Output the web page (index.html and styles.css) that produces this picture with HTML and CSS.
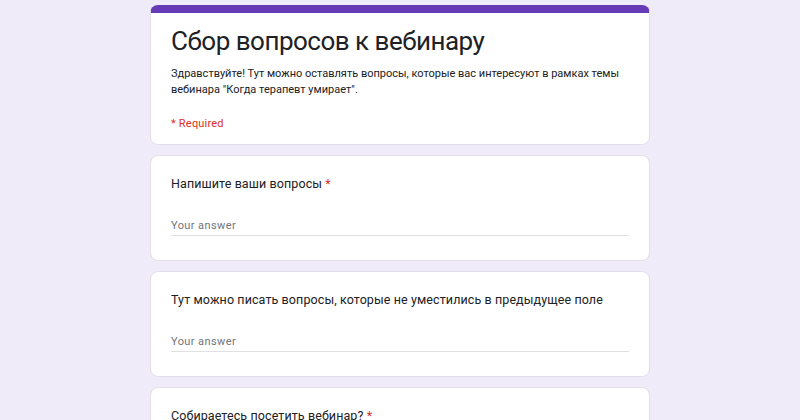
FILE: index.html
```html
<!DOCTYPE html>
<html lang="ru">
<head>
    <meta charset="UTF-8">
    <title>Сбор вопросов к вебинару</title>
    <link rel="stylesheet" href="styles.css">
</head>
<body>
    <div class="form">
        <!-- Header card -->
        <div class="card header-card">
            <div class="title">Сбор вопросов к вебинару</div>
            <div class="description">Здравствуйте! Тут можно оставлять вопросы, которые вас интересуют в рамках темы вебинара "Когда терапевт умирает".</div>
            <div class="required-note">* Required</div>
        </div>

        <div class="card question">
            <div class="question-title">Напишите ваши вопросы <span class="star">*</span></div>
            <div class="answer">Your answer</div>
        </div>

        <div class="card question">
            <div class="question-title">Тут можно писать вопросы, которые не уместились в предыдущее поле</div>
            <div class="answer">Your answer</div>
        </div>

        <div class="card question">
            <div class="question-title">Собираетесь посетить вебинар? <span class="star">*</span></div>
            <div class="answer">Your answer</div>
        </div>
    </div>
</body>
</html>
```

FILE: styles.css
```css
body {
    margin: 0;
    background: #f0ebf8;
    font-family: Roboto, "Noto Sans", sans-serif;
    color: #202124;
    height: 420px;
    overflow: hidden;
}

.form {
    width: 500px;
    margin: 5px auto 0;
    display: flex;
    flex-direction: column;
    gap: 10px;
}

.card {
    background: #fff;
    border: 1px solid #e3dfea;
    border-radius: 8px;
    padding: 18px 20px 24px;
    box-sizing: border-box;
}

.header-card {
    border-top: 8px solid #673ab7;
    padding: 10px 20px 12px;
}

.title {
    font-size: 26px;
    line-height: 36px;
    letter-spacing: -0.5px;
}

.description {
    margin-top: 7px;
    font-size: 11px;
    line-height: 16px;
}

.required-note {
    margin-top: 18px;
    font-size: 11px;
    line-height: 16px;
    color: #d93025;
    letter-spacing: 0.2px;
}

.question-title {
    font-size: 12.5px;
    line-height: 20px;
    letter-spacing: 0.1px;
}

.star {
    color: #d93025;
}

.answer {
    margin-top: 24px;
    font-size: 11px;
    line-height: 16px;
    color: #70757a;
    letter-spacing: 0.4px;
    padding-bottom: 1px;
    border-bottom: 1px solid #e0e0e0;
}
```
